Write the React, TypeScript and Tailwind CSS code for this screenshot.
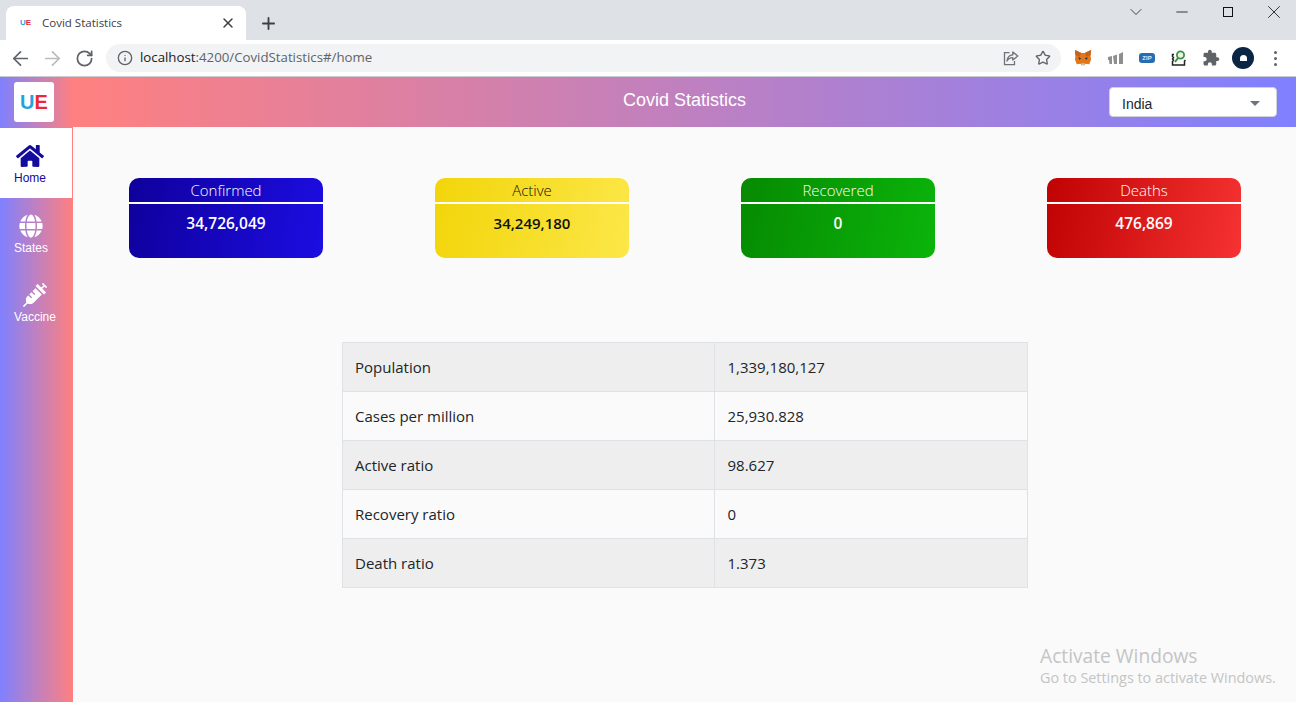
import React from "react";
import { FaHome, FaGlobe, FaSyringe } from "react-icons/fa";
import { ArrowLeft, ArrowRight, RotateCw, Info, Star, X, Plus, ChevronDown, Minus } from "lucide-react";

const seg = "font-['Open_Sans','Noto_Sans',sans-serif]";

function Fox() {
  return (
    <svg width="16" height="16" viewBox="0 0 18 18">
      <path d="M0 0l7 3.500h4L18 0l-.5 6L18 11l-2 5-4-.5-1.500 1.500h-3L6 15.500 2 16 0 11 .5 6z" fill="#e2761b" />
      <path d="M0 0l7 3.500-2 4-4.500-1.500zM18 0l-7 3.500 2 4 4.500-1.500z" fill="#c5611a" />
      <path d="M7 15h4l-.5 2.500h-3z" fill="#d7c1b3" />
      <path d="M4 8l3 1.500-2.500 1.500zM14 8l-3 1.500 2.500 1.500z" fill="#233447" />
    </svg>
  );
}

function Bars() {
  return (
    <svg width="16" height="12" viewBox="0 0 16 12">
      <path d="M0 5l4-1v8H1.500L1 8H0zM5 4l4-1.500V12H6zM11 2l4-2v12h-4z" fill="#8f8f8f" />
    </svg>
  );
}

function Zip() {
  return (
    <div className="flex h-[10px] w-[16px] items-center justify-center rounded-[3px] bg-[#2a6cb0] font-['Liberation_Sans',sans-serif] text-[6px] font-bold text-[#dfe9f5]">
      ZIP
    </div>
  );
}

function Lens() {
  return (
    <svg width="16" height="17" viewBox="0 0 16 17">
      <path d="M3 4.500H1.500v2l1 1-1 1.500 1 1-1 1.500v3.500h12V11l1-1" fill="none" stroke="#222" strokeWidth="1.500" />
      <circle cx="9.500" cy="5" r="3.600" fill="#e8f4e4" stroke="#3f9142" strokeWidth="1.800" />
      <path d="M7 8l-3 4" stroke="#3f9142" strokeWidth="2" />
    </svg>
  );
}

function ShareBox() {
  return (
    <svg width="16" height="15" viewBox="0 0 16 15" fill="none" stroke="#6f7276" strokeWidth="1.300">
      <path d="M6.500 1.700H1.500v12h10V10" />
      <path d="M9.800 1l5 4-5 4V6.700C7 6.700 5.300 7.700 4 10c.3-3.500 2.500-6 5.800-6.200z" strokeLinejoin="round" />
    </svg>
  );
}

function Extension() {
  return (
    <svg width="18" height="18" viewBox="0 0 24 24" fill="#5f6368">
      <path d="M20.500 11H19V7c0-1.100-.9-2-2-2h-4V3.500C13 2.120 11.880 1 10.500 1S8 2.120 8 3.500V5H4c-1.100 0-1.990.9-1.990 2v3.800H3.500c1.490 0 2.700 1.210 2.700 2.700s-1.210 2.700-2.700 2.700H2V20c0 1.100.9 2 2 2h3.800v-1.500c0-1.490 1.210-2.700 2.700-2.700 1.490 0 2.700 1.210 2.700 2.700V22H17c1.100 0 2-.9 2-2v-4h1.500c1.380 0 2.500-1.120 2.500-2.500S21.880 11 20.500 11z" />
    </svg>
  );
}

function BrowserChrome() {
  return (
    <div className="shrink-0 font-['Liberation_Sans',sans-serif]">
      <div className="flex h-[40px] items-end bg-[#dee1e6] pl-[6px]">
        <div className="flex h-[34px] w-[240px] items-center rounded-t-[8px] bg-white pl-[14px] pr-[10px]">
          <span className="w-[22px] text-[8px] font-bold leading-none">
            <span className="text-[#29a3dd]">U</span>
            <span className="text-[#ee2737]">E</span>
          </span>
          <span className={`${seg} flex-1 text-[11.500px] text-[#3c4043]`}>Covid Statistics</span>
          <X size={16} strokeWidth={2.200} className="text-[#3c4043]" />
        </div>
        <div className="flex h-[34px] w-[44px] items-center justify-center">
          <Plus size={19} strokeWidth={2.300} className="text-[#3c4043]" />
        </div>
        <div className="ml-auto -mr-px flex h-[24px] items-center self-start">
          <div className="flex w-[46px] justify-center"><ChevronDown size={20} strokeWidth={1} className="text-[#222]" /></div>
          <div className="flex w-[46px] justify-center"><Minus size={18} strokeWidth={1.100} className="text-[#111]" /></div>
          <div className="flex w-[46px] justify-center"><div className="h-[10px] w-[10px] border border-[#111]" /></div>
          <div className="flex w-[46px] justify-center"><X size={22} strokeWidth={0.900} className="text-[#111]" /></div>
        </div>
      </div>
      <div className="flex h-[37px] items-center border-b border-[#c9ccd1] bg-white">
        <div className="flex w-[106px] items-center pl-[4px]">
          <div className="flex w-[32px] justify-center"><ArrowLeft size={23} strokeWidth={1.800} className="text-[#5f6368]" /></div>
          <div className="flex w-[32px] justify-center"><ArrowRight size={23} strokeWidth={1.800} className="text-[#babcbe]" /></div>
          <div className="flex w-[32px] justify-center"><RotateCw size={19} strokeWidth={2.200} className="text-[#5f6368]" /></div>
        </div>
        <div className="flex h-[28px] w-[955px] items-center rounded-full bg-[#f1f3f4] pl-[11px] pr-[10px]">
          <Info size={16} strokeWidth={2} className="text-[#5f6368]" />
          <span className={`${seg} ml-[7px] flex-1 text-[13.250px] text-[#5f6368]`}>
            <span className="text-[#202124]">localhost</span>:4200/CovidStatistics#/home
          </span>
          <div className="mr-[16px]"><ShareBox /></div>
          <Star size={16} strokeWidth={2} className="text-[#5f6368]" />
        </div>
        <div className="ml-[14px] flex items-center">
          <Fox />
          <div className="ml-[17px]"><Bars /></div>
          <div className="ml-[15px]"><Zip /></div>
          <div className="ml-[16px]"><Lens /></div>
          <div className="ml-[15px]"><Extension /></div>
          <div className="ml-[12px] flex h-[22px] w-[22px] items-center justify-center rounded-full bg-[#0b2545]">
            <div className="h-[6px] w-[7px] rounded-t-full bg-white" />
          </div>
          <div className="ml-[20px] flex flex-col gap-[3px]">
            <div className="h-[3px] w-[3px] rounded-full bg-[#5f6368]" />
            <div className="h-[3px] w-[3px] rounded-full bg-[#5f6368]" />
            <div className="h-[3px] w-[3px] rounded-full bg-[#5f6368]" />
          </div>
        </div>
      </div>
    </div>
  );
}

function Sidebar() {
  return (
    <aside className="flex w-[73px] shrink-0 flex-col bg-[linear-gradient(to_right,#8080ff,#ff8080)] font-['Liberation_Sans',sans-serif] text-[12px]">
      <div className="flex h-[50px] shrink-0 items-center pb-[1px] pl-[14px]">
        <div className="flex h-[40px] w-[40px] items-center justify-center rounded-[3px] bg-white text-[20px] font-bold">
          <span className="text-[#1ea5df]">U</span>
          <span className="text-[#ee2737]">E</span>
        </div>
      </div>
      <div className="mt-[1px] w-[72px] bg-white">
        <div className="flex h-[70px] w-[60px] flex-col items-center pt-[14px] text-[#140a9e]">
          <FaHome size={28} />
          <span className="mt-[1px] leading-[14px]">Home</span>
        </div>
      </div>
      <div className="flex h-[70px] w-[62px] flex-col items-center pt-[16px] text-white">
        <FaGlobe size={24} />
        <span className="mt-[3px] leading-[14px]">States</span>
      </div>
      <div className="flex h-[68px] w-[70px] flex-col items-center pt-[15px] text-white">
        <FaSyringe size={24} />
        <span className="mt-[3px] font-medium leading-[14px]">Vaccine</span>
      </div>
    </aside>
  );
}

const cards = [
  { t: "Confirmed", v: "34,726,049", cls: "bg-[linear-gradient(100deg,#0f009c,#1c0de2)] text-white", val: "text-[15.500px]" },
  { t: "Active", v: "34,249,180", cls: "bg-[linear-gradient(100deg,#f2d50a,#fce748)] text-[#111111]", val: "text-[15px]" },
  { t: "Recovered", v: "0", cls: "bg-[linear-gradient(100deg,#068a02,#0bb40a)] text-white", val: "text-[15.500px]" },
  { t: "Deaths", v: "476,869", cls: "bg-[linear-gradient(100deg,#bf0202,#f63232)] text-white", val: "text-[15.500px]" },
];

const rows = [
  ["Population", "1,339,180,127"],
  ["Cases per million", "25,930.828"],
  ["Active ratio", "98.627"],
  ["Recovery ratio", "0"],
  ["Death ratio", "1.373"],
];

export default function App() {
  return (
    <div className="flex h-[702px] w-[1296px] flex-col overflow-hidden bg-[#fafafa]">
      <BrowserChrome />
      <div className="flex min-h-0 flex-1">
        <Sidebar />
        <main className={`${seg} relative flex min-w-0 flex-1 flex-col`}>
          <header className="relative flex h-[50px] shrink-0 items-center justify-center bg-[linear-gradient(to_right,#ff8080,#8080ff)] pb-[4px] font-['Liberation_Sans',sans-serif] text-[18px] text-white">
            Covid Statistics
            <div className="absolute right-[19px] top-[10px] flex h-[30px] w-[168px] items-center justify-between rounded-[4px] border border-[#ced4da] bg-white pl-[12px] pr-[16px] text-[14px] text-[#212529]">
              <span className="pt-[5px]">India</span>
              <span className="mt-[2px] h-0 w-0 border-x-[5px] border-t-[5px] border-x-transparent border-t-[#6c757d]" />
            </div>
          </header>
          <div className="flex justify-between pl-[56px] pr-[55px] pt-[51px]">
            {cards.map((c) => (
              <div key={c.t} className={`h-[80px] w-[194px] rounded-[10px] text-center ${c.cls}`}>
                <div className="h-[26px] border-b-2 border-white text-[15px] font-light leading-[24px]">{c.t}</div>
                <div className={`pt-[7px] font-semibold leading-[24px] ${c.val}`}>{c.v}</div>
              </div>
            ))}
          </div>
          <div className="flex justify-center pl-[1px] pt-[84px]">
            <table className="w-[686px] border-collapse text-[15px] text-[#212529]">
              <tbody>
                {rows.map((r, i) => (
                  <tr key={r[0]} className={`h-[49px] ${i % 2 === 0 ? "bg-[#eeeeee]" : ""}`}>
                    <td className="w-[372px] border border-[#dee2e6] px-[12px]">{r[0]}</td>
                    <td className="border border-[#dee2e6] pl-[12.500px] pr-[12px]">{r[1]}</td>
                  </tr>
                ))}
              </tbody>
            </table>
          </div>
          <div className="absolute left-[967px] top-[566px] text-[#c4c4c4]">
            <div className="text-[19.200px] leading-[25px]">Activate Windows</div>
            <div className="text-[14.400px] leading-[20px]">Go to Settings to activate Windows.</div>
          </div>
        </main>
      </div>
    </div>
  );
}
